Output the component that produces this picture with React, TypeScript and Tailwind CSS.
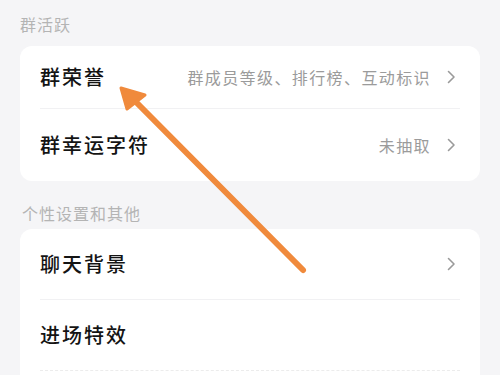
import React from 'react';

const font = { fontFamily: '"Noto Sans CJK SC", "Noto Sans", sans-serif' };

function Chevron() {
  return (
    <svg width="10" height="14" viewBox="0 0 10 14" className="ml-[15px] shrink-0">
      <path d="M2.5 1.5 L8 7 L2.5 12.5" fill="none" stroke="#9a9a9a" strokeWidth="1.6" strokeLinecap="round" strokeLinejoin="round" />
    </svg>
  );
}

type Row = { title: string; value?: string; arrow?: boolean; h: string };

function Card({ rows, last }: { rows: Row[]; last?: boolean }) {
  return (
    <div className="mx-[20px] bg-white rounded-[12px] overflow-hidden">
      {rows.map((r, i) => (
        <div key={r.title}>
          {i > 0 && <div className="mx-[20px] h-px bg-[#f1f1f3]" />}
          <div className={`flex items-center pl-[20px] pr-[24px] ${r.h}`}>
            <span className="text-[20px] text-[#141414] tracking-[2px] font-medium">{r.title}</span>
            <span className="ml-auto text-[16px] text-[#9b9b9b] tracking-[1.4px]">{r.value}</span>
            {r.arrow && <Chevron />}
          </div>
        </div>
      ))}
      {last && <div className="mx-[20px] h-[20px] border-t border-dashed border-[#ececec]" />}
    </div>
  );
}

export default function App() {
  return (
    <div className="relative w-[500px] h-[375px] overflow-hidden bg-[#f5f5f7]" style={font}>
      <div className="h-[46px] pl-[20px] pt-[12px] text-[16px] tracking-[1px] text-[#b4b4b4]">群活跃</div>
      <Card
        rows={[
          { title: '群荣誉', value: '群成员等级、排行榜、互动标识', arrow: true, h: 'h-[62px]' },
          { title: '群幸运字符', value: '未抽取', arrow: true, h: 'h-[72px]' },
        ]}
      />
      <div className="h-[48px] pl-[22px] pt-[20px] text-[16px] tracking-[1px] text-[#b4b4b4]">个性设置和其他</div>
      <Card
        last
        rows={[
          { title: '聊天背景', arrow: true, h: 'h-[70px]' },
          { title: '进场特效', h: 'h-[70px]' },
        ]}
      />
      <svg className="absolute left-0 top-0 pointer-events-none" width="500" height="375">
        <line x1="303" y1="270" x2="134" y2="100" stroke="#f08a3c" strokeWidth="6" strokeLinecap="round" />
        <polygon points="121,88 145,95 127,109" fill="#f08a3c" stroke="#f08a3c" strokeWidth="3" strokeLinejoin="round" />
      </svg>
    </div>
  );
}
